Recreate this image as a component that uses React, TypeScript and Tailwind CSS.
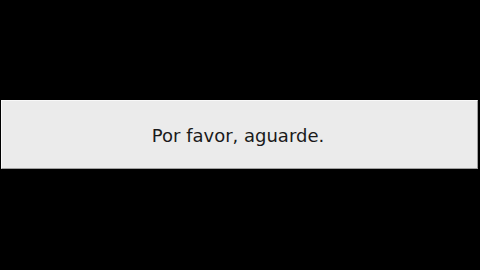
export default function App() {
  return (
    <div className="w-[480px] h-[270px] bg-black flex flex-col">
      <div className="h-[100px]" />
      <div className="ml-[1px] w-[477px] h-[69px] bg-[#ebebeb] border border-t-[#f8f8f8] border-l-[#f8f8f8] border-r-[#a0a0a0] border-b-[#a0a0a0] flex items-center justify-center">
        <span className="text-[18px] text-[#1a1a1a] pr-[3px] pt-[1px]" style={{ fontFamily: '"DejaVu Sans", Verdana, sans-serif' }}>
          Por favor, aguarde.
        </span>
      </div>
    </div>
  );
}
